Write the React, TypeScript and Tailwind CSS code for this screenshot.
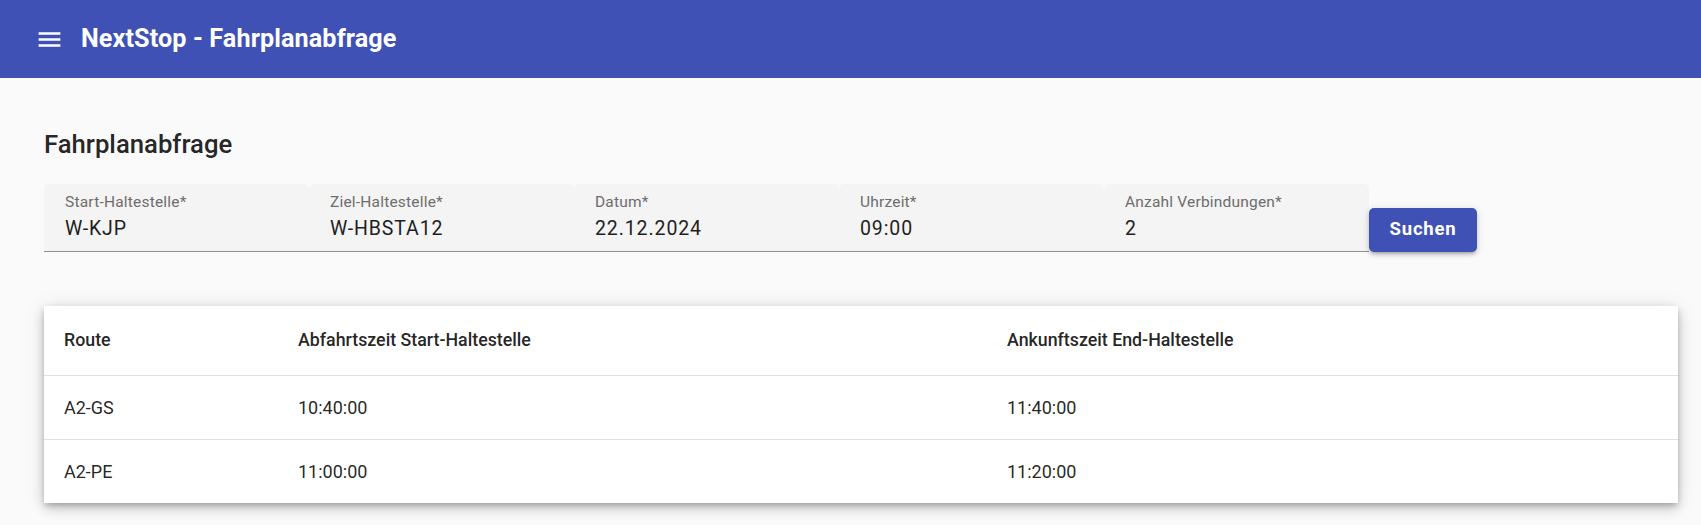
import React from "react"

const fields = [
  { label: "Start-Haltestelle*", value: "W-KJP" },
  { label: "Ziel-Haltestelle*", value: "W-HBSTA12" },
  { label: "Datum*", value: "22.12.2024" },
  { label: "Uhrzeit*", value: "09:00" },
  { label: "Anzahl Verbindungen*", value: "2" },
]

const rows = [
  { route: "A2-GS", dep: "10:40:00", arr: "11:40:00" },
  { route: "A2-PE", dep: "11:00:00", arr: "11:20:00" },
]

function MenuIcon() {
  return (
    <svg width="29" height="29" viewBox="0 0 24 24" fill="white">
      <path d="M3 18h18v-2H3v2zm0-5h18v-2H3v2zm0-7v2h18V6H3z" />
    </svg>
  )
}

export default function App() {
  return (
    <div className="min-h-screen bg-[#fafafa] font-['Roboto','Liberation_Sans',sans-serif] text-[rgba(0,0,0,0.87)]">
      {/* Toolbar */}
      <header className="h-[78px] bg-[#3f51b5] flex items-center pl-[35px] text-white">
        <MenuIcon />
        <h1 className="ml-[17px] text-[25.2px] font-bold tracking-[0.1px]">NextStop - Fahrplanabfrage</h1>
      </header>

      <main className="px-[44px] pr-[23px]">
        <h2 className="mt-[50px] text-[25.7px] leading-[32px] font-medium">Fahrplanabfrage</h2>

        {/* Search form */}
        <div className="mt-[24px] flex items-end">
          <div className="flex border-b border-[#8e8e8e]">
            {fields.map((f) => (
              <div
                key={f.label}
                className="w-[265px] bg-[#f4f4f4] rounded-t-[5px] px-[21px] pt-[9px] pb-[10px]"
              >
                <div className="text-[15.5px] leading-[18px] text-[#6d6d6d] tracking-[0.2px]">{f.label}</div>
                <div className="mt-[6px] text-[19.5px] leading-[24px] tracking-[0.9px] text-[#1f1f1f]">{f.value}</div>
              </div>
            ))}
          </div>
          <button className="w-[108px] h-[44px] rounded-[5px] bg-[#3f51b5] text-white text-[18.5px] font-bold tracking-[0.8px] shadow-[0_3px_3px_-2px_rgba(0,0,0,0.2),0_3px_4px_0_rgba(0,0,0,0.14),0_1px_8px_0_rgba(0,0,0,0.12)]">
            Suchen
          </button>
        </div>

        {/* Results */}
        <div className="mt-[54px] bg-white shadow-[0_3px_6px_-1px_rgba(0,0,0,0.25),0_6px_12px_0_rgba(0,0,0,0.14),0_1px_18px_0_rgba(0,0,0,0.1)]">
          <table className="w-full table-fixed border-collapse text-[18px]">
            <thead>
              <tr className="h-[69px] border-b border-[#e0e0e0] text-[17.8px]">
                <th className="w-[234px] text-left font-medium pl-[20px]">Route</th>
                <th className="w-[709px] text-left font-medium pl-[20px]">Abfahrtszeit Start-Haltestelle</th>
                <th className="text-left font-medium pl-[20px]">Ankunftszeit End-Haltestelle</th>
              </tr>
            </thead>
            <tbody>
              {rows.map((r, i) => (
                <tr key={r.route} className={`h-[64px] ${i < rows.length - 1 ? "border-b border-[#e0e0e0]" : ""}`}>
                  <td className="pl-[20px]">{r.route}</td>
                  <td className="pl-[20px]">{r.dep}</td>
                  <td className="pl-[20px]">{r.arr}</td>
                </tr>
              ))}
            </tbody>
          </table>
        </div>
      </main>
    </div>
  )
}
